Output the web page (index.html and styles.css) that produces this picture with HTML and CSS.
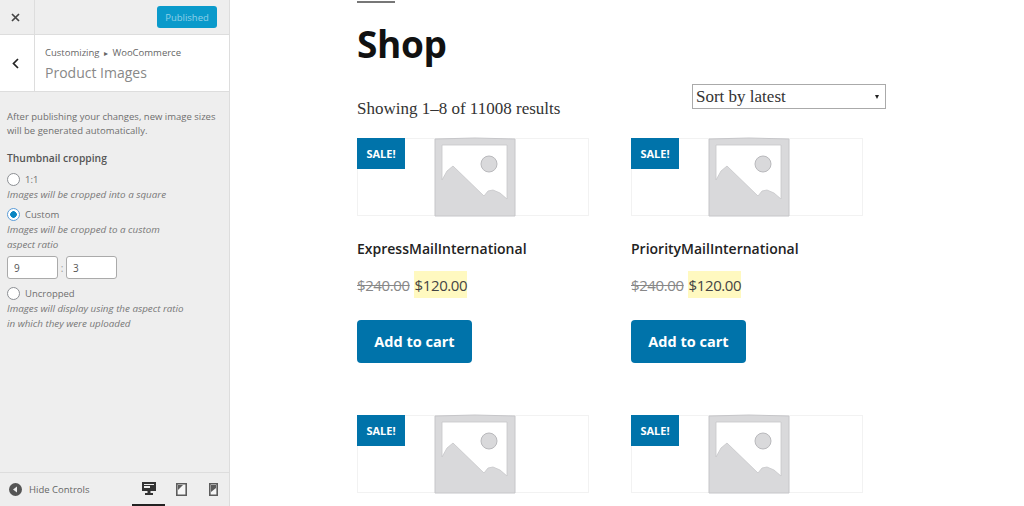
FILE: index.html
```html
<!DOCTYPE html>
<html lang="en">
<head>
    <meta charset="UTF-8">
    <meta name="viewport" content="width=device-width, initial-scale=1.0">
    <title>Product Images - Customizer</title>
    <link rel="stylesheet" href="styles.css">
</head>
<body>

    <!-- Customizer Sidebar -->
    <aside class="sidebar">
        <div class="topbar">
            <div class="close-btn">
                <svg width="9" height="9" viewBox="0 0 9 9"><path d="M1 1 8 8M8 1 1 8" stroke="#444" stroke-width="1.7" fill="none"/></svg>
            </div>
            <button type="button" class="publish-btn">Published</button>
        </div>

        <div class="section-head">
            <div class="back-btn">
                <svg width="7" height="11" viewBox="0 0 7 11"><path d="M6 1 1.5 5.5 6 10" stroke="#222" stroke-width="1.7" fill="none"/></svg>
            </div>
            <div class="section-titles">
                <div class="crumbs">Customizing <span class="crumb-arrow">&#9656;</span> WooCommerce</div>
                <div class="section-name">Product Images</div>
            </div>
        </div>

        <div class="controls">
            <p class="intro">After publishing your changes, new image sizes will be generated automatically.</p>
            <div class="control-title">Thumbnail cropping</div>

            <label class="radio-row"><input type="radio" name="crop"> 1:1</label>
            <p class="hint">Images will be cropped into a square</p>

            <label class="radio-row"><input type="radio" name="crop" checked> Custom</label>
            <p class="hint">Images will be cropped to a custom<br>aspect ratio</p>
            <div class="ratio">
                <input type="text" value="9">
                <span>:</span>
                <input type="text" value="3">
            </div>

            <label class="radio-row"><input type="radio" name="crop"> Uncropped</label>
            <p class="hint">Images will display using the aspect ratio<br>in which they were uploaded</p>
        </div>

        <div class="footer-bar">
            <div class="hide-controls">
                <svg width="13" height="13" viewBox="0 0 13 13"><circle cx="6.5" cy="6.5" r="6.5" fill="#555"/><path d="M8 3.5v6L4 6.5z" fill="#eee"/></svg>
                Hide Controls
            </div>
            <div class="devices">
                <div class="device active">
                    <svg width="14" height="13" viewBox="0 0 14 13"><path d="M0 0h14v9H8.500v2H11v2H3v-2h2.500V9H0z" fill="#333"/><path d="M2 2h10v1H2zM2 4h6v2H2z" fill="#eee"/></svg>
                </div>
                <div class="device">
                    <svg width="11" height="13" viewBox="0 0 11 13"><path d="M.8.8h9.400v11.400H.8z" fill="#f6f6f6" stroke="#5c5c5c" stroke-width="1.600"/><path d="M2 2h5L2 7z" fill="#5c5c5c"/></svg>
                </div>
                <div class="device">
                    <svg width="9" height="13" viewBox="0 0 9 13"><path d="M.8.8h7.400v11.400H.8z" fill="#f6f6f6" stroke="#5c5c5c" stroke-width="1.600"/><path d="M2 2h5v3L2 9z" fill="#5c5c5c"/></svg>
                </div>
            </div>
        </div>
    </aside>

    <!-- Shop Preview -->
    <main class="preview">
        <div class="rule"></div>
        <h1>Shop</h1>

        <div class="shop-bar">
            <p class="result-count">Showing 1&ndash;8 of 11008 results</p>
            <div class="sort">
                <select>
                    <option>Sort by latest</option>
                </select>
            </div>
        </div>

        <div class="products">
            <div class="product">
                <div class="thumb">
                    <span class="sale">SALE!</span>
                    <svg class="placeholder" viewBox="0 0 80 78"><use href="#ph"/></svg>
                </div>
                <h2>ExpressMailInternational</h2>
                <div class="price"><del>$240.00</del> <ins>$120.00</ins></div>
                <a class="cart-btn">Add to cart</a>
            </div>
            <div class="product">
                <div class="thumb">
                    <span class="sale">SALE!</span>
                    <svg class="placeholder" viewBox="0 0 80 78"><use href="#ph"/></svg>
                </div>
                <h2>PriorityMailInternational</h2>
                <div class="price"><del>$240.00</del> <ins>$120.00</ins></div>
                <a class="cart-btn">Add to cart</a>
            </div>
            <div class="product">
                <div class="thumb">
                    <span class="sale">SALE!</span>
                    <svg class="placeholder" viewBox="0 0 80 78"><use href="#ph"/></svg>
                </div>
            </div>
            <div class="product">
                <div class="thumb">
                    <span class="sale">SALE!</span>
                    <svg class="placeholder" viewBox="0 0 80 78"><use href="#ph"/></svg>
                </div>
            </div>
        </div>
    </main>

    <!-- Placeholder picture, shared by the product cards -->
    <svg class="defs" width="0" height="0">
        <defs>
            <g id="ph">
                <path d="M0 1 40 0l40 1v77H0z" fill="#d9d9db" stroke="#c6c6c9"/>
                <path d="M7 7h65v54l-7-6-7-3-5 1-4 5-31-30-6 5-5 9H7z" fill="#fff" stroke="#c6c6c9" stroke-width=".8"/>
                <circle cx="54" cy="26" r="8" fill="#d9d9db" stroke="#b9b9bc"/>
            </g>
        </defs>
    </svg>

</body>
</html>
```

FILE: styles.css
```css
* {
    margin: 0;
    padding: 0;
    box-sizing: border-box;
}

html,
body {
    height: 506px;
    overflow: hidden;
}

body {
    display: flex;
    background-color: #fff;
    font-family: 'Open Sans', sans-serif;
    color: #555d66;
}

.defs {
    position: absolute;
}

/* Sidebar */
.sidebar {
    width: 230px;
    flex-shrink: 0;
    display: flex;
    flex-direction: column;
    background-color: #eeeeee;
    border-right: 1px solid #ddd;
}

.topbar {
    height: 35px;
    display: flex;
    align-items: center;
    justify-content: space-between;
    padding-right: 12px;
    border-bottom: 1px solid #ddd;
}

.close-btn {
    width: 35px;
    height: 34px;
    display: flex;
    align-items: center;
    justify-content: center;
    padding-right: 3px;
    border-right: 1px solid #ddd;
}

.publish-btn {
    width: 60px;
    height: 22px;
    border: none;
    border-radius: 3px;
    background-color: #0a9acb;
    color: #8fd0e8;
    font-family: inherit;
    font-size: 9.5px;
}

.section-head {
    height: 57px;
    display: flex;
    background-color: #fff;
    border-bottom: 1px solid #ddd;
}

.back-btn {
    width: 35px;
    display: flex;
    align-items: center;
    justify-content: center;
    padding-right: 4px;
    border-right: 1px solid #ddd;
}

.section-titles {
    padding: 11px 0 0 10px;
}

.crumbs {
    font-size: 9.5px;
    line-height: 14px;
    color: #666;
}

.crumb-arrow {
    margin: 0 2px;
    font-size: 8px;
}

.section-name {
    margin-top: 3px;
    font-size: 14px;
    line-height: 19px;
    color: #888;
}

.controls {
    flex: 1;
    padding: 18px 7px 0;
}

.intro {
    font-size: 9.5px;
    line-height: 14px;
    color: #6f6f6f;
}

.control-title {
    margin-top: 13px;
    margin-bottom: 6px;
    font-size: 10.3px;
    font-weight: 600;
    line-height: 14px;
    color: #555;
}

.radio-row {
    display: flex;
    align-items: center;
    gap: 5px;
    height: 16px;
    font-size: 9.5px;
    color: #6f6f6f;
}

.radio-row input {
    appearance: none;
    width: 13px;
    height: 13px;
    border: 1px solid #8c8f94;
    border-radius: 50%;
    background-color: #fff;
}

.radio-row input:checked {
    border-color: #5b9dd9;
    background: radial-gradient(circle, #0a85c2 0 3px, #fff 3.6px);
}

.hint {
    margin-bottom: 4px;
    font-size: 9.8px;
    font-style: italic;
    line-height: 15px;
    color: #777;
}

.ratio {
    display: flex;
    align-items: center;
    gap: 2px;
    margin-bottom: 6px;
}

.ratio span {
    width: 4px;
    text-align: center;
    color: #999;
    font-size: 10px;
}

.ratio input {
    width: 51px;
    height: 23px;
    padding-left: 6px;
    border: 1px solid #aaa;
    border-radius: 3px;
    font-family: inherit;
    font-size: 10px;
    color: #555;
}

.footer-bar {
    height: 34px;
    display: flex;
    justify-content: space-between;
    padding-left: 9px;
    border-top: 1px solid #ddd;
}

.hide-controls {
    display: flex;
    align-items: center;
    gap: 7px;
    font-size: 9.5px;
    color: #666;
}

.devices {
    display: flex;
}

.device {
    width: 32px;
    display: flex;
    align-items: center;
    justify-content: center;
}

.device.active {
    width: 33px;
    border-bottom: 2px solid #222;
}

/* Shop preview */
.preview {
    flex: 1;
    padding-left: 127px;
    color: #111;
}

.rule {
    width: 38px;
    height: 2px;
    margin-top: 1px;
    background-color: #777;
}

h1 {
    margin-top: 16px;
    font-size: 37px;
    font-weight: 700;
    letter-spacing: -0.4px;
    line-height: 50px;
}

.shop-bar {
    height: 69px;
    width: 529px;
    display: flex;
    justify-content: space-between;
    font-family: 'Liberation Serif', serif;
}

.result-count {
    margin-top: 30px;
    font-size: 17px;
    line-height: 20px;
    color: #333;
}

.sort {
    position: relative;
    width: 194px;
    height: 25px;
    margin-top: 15px;
}

.sort select {
    appearance: none;
    width: 100%;
    height: 100%;
    padding-left: 3px;
    border: 1px solid #aaa;
    border-radius: 0;
    background-color: #fff;
    font-family: 'Liberation Serif', serif;
    font-size: 17px;
    color: #333;
}

.sort::after {
    content: "";
    position: absolute;
    top: 11px;
    right: 7px;
    border-top: 4px solid #222;
    border-left: 2.5px solid transparent;
    border-right: 2.5px solid transparent;
}

.products {
    display: grid;
    grid-template-columns: 232px 232px;
    column-gap: 42px;
    grid-auto-rows: 277px;
}

.thumb {
    position: relative;
    height: 78px;
    display: flex;
    justify-content: center;
    border: 1px solid #f2f2f2;
}

.placeholder {
    width: 80px;
    height: 78px;
    margin-top: -1px;
    margin-left: 4px;
    overflow: visible;
}

.sale {
    position: absolute;
    top: -1px;
    left: -1px;
    width: 48px;
    height: 31px;
    display: flex;
    align-items: center;
    justify-content: center;
    background-color: #0073aa;
    color: #fff;
    font-size: 11px;
    font-weight: 700;
}

h2 {
    margin-top: 23px;
    font-size: 14px;
    font-weight: 600;
    line-height: 20px;
    color: #222;
}

.price {
    display: flex;
    align-items: center;
    gap: 4px;
    margin-top: 12px;
    font-size: 15px;
    letter-spacing: -0.4px;
}

.price del {
    color: #888;
}

.price ins {
    padding: 4px 0 3px 1px;
    background-color: #fff9c0;
    color: #444;
    line-height: 20px;
    text-decoration: none;
}

.cart-btn {
    display: flex;
    align-items: center;
    justify-content: center;
    width: 115px;
    height: 43px;
    margin-top: 22px;
    border-radius: 4px;
    background-color: #0073aa;
    color: #fff;
    font-size: 14.5px;
    font-weight: 700;
}
```
